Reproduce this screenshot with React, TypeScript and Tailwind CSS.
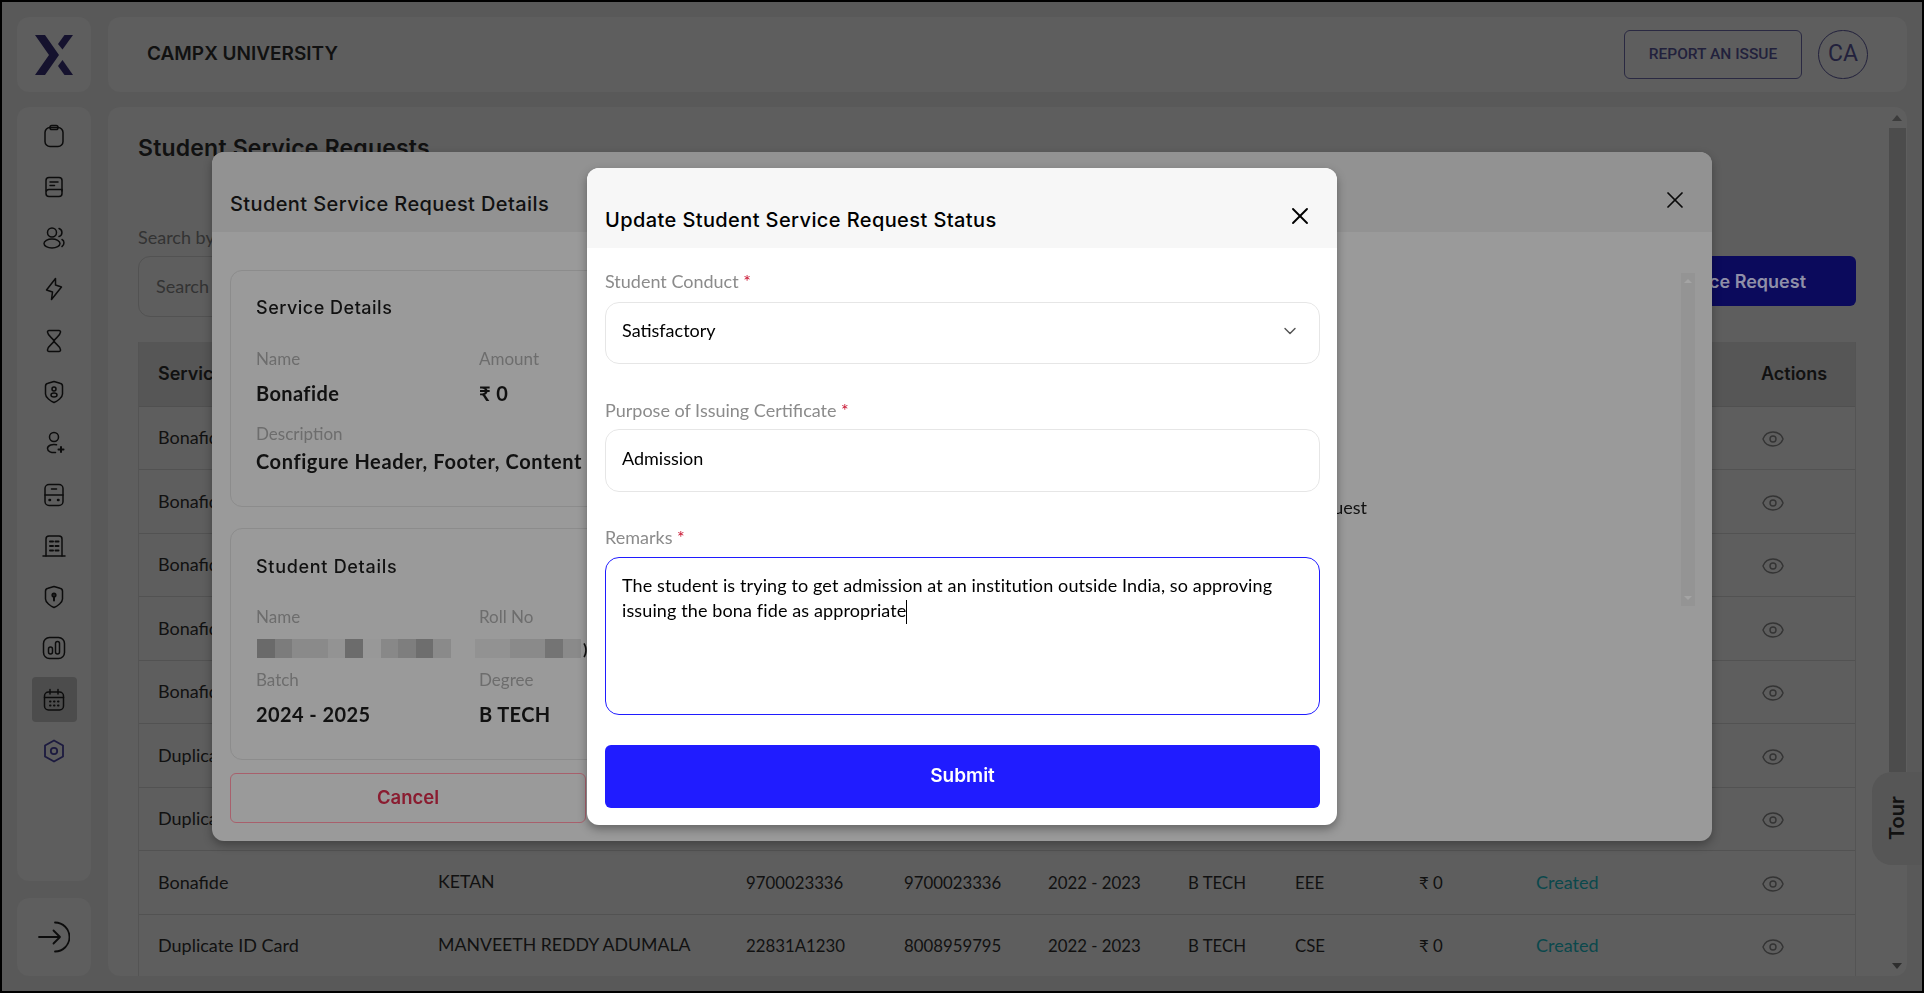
import { ChevronDown, Eye, X } from "lucide-react";
import type { ReactNode } from "react";

const heading = "font-['Inter',sans-serif]";
const cols = "grid grid-cols-[280px_308px_158px_144px_140px_107px_124px_117px_225px_114px]";

const rows = [
  { service: "Bonafide" },
  { service: "Bonafide" },
  { service: "Bonafide" },
  { service: "Bonafide" },
  { service: "Bonafide" },
  { service: "Duplicate ID Card" },
  { service: "Duplicate ID Card" },
  { service: "Bonafide", name: "KETAN", roll: "9700023336", phone: "9700023336", batch: "2022 - 2023", degree: "B TECH", branch: "EEE", amount: "₹ 0", status: "Created" },
  { service: "Duplicate ID Card", name: "MANVEETH REDDY ADUMALA", roll: "22831A1230", phone: "8008959795", batch: "2022 - 2023", degree: "B TECH", branch: "CSE", amount: "₹ 0", status: "Created" },
];

const nameBlocks = [
  "w-[18px] bg-[#6a6a6a]", "w-[17px] bg-[#7c7c7c]", "w-[36px] bg-[#8a8a8a]", "w-[17px] bg-[#939393]", "w-[18px] bg-[#6c6c6c]",
  "w-[18px] bg-[#989898]", "w-[17px] bg-[#888888]", "w-[18px] bg-[#7e7e7e]", "w-[17px] bg-[#6e6e6e]", "w-[18px] bg-[#8a8a8a]",
];
const rollBlocks = ["w-[35px] bg-[#929292]", "w-[35px] bg-[#8a8a8a]", "w-[18px] bg-[#747474]", "w-[18px] bg-[#8a8a8a]"];

function Ico({ children, className = "text-[#0c0c0c]" }: { children: ReactNode; className?: string }) {
  return (
    <svg width="24" height="24" viewBox="0 0 24 24" fill="none" stroke="currentColor" strokeWidth="1.5" strokeLinecap="round" strokeLinejoin="round" className={className}>
      {children}
    </svg>
  );
}

const navIcons = [
  <Ico key="clip"><rect x="3" y="3.5" width="18" height="19" rx="5" /><rect x="8" y="1.5" width="8" height="4" rx="1.8" /></Ico>,
  <Ico key="book"><path d="M4 16V5.5A3 3 0 0 1 7 2.5h10a3 3 0 0 1 3 3V16" /><path d="M4 17a3 3 0 0 1 3-2.5h13V18.5a3 3 0 0 1-3 3H7a3 3 0 0 1-3-3Z" /><path d="M8 7h8M8 10.5h4.5" /></Ico>,
  <Ico key="users"><circle cx="10" cy="6.5" r="4.5" /><ellipse cx="10" cy="17.5" rx="8" ry="4.5" /><path d="M17 2.5a4.2 4.2 0 0 1 0 8" /><path d="M20 13.5c2.6 1.2 2.6 5.4 0 7" /></Ico>,
  <Ico key="bolt"><path d="M13.5 1.500 4.500 13l6 2L9.500 22.500 19.500 10l-6-2Z" /></Ico>,
  <Ico key="glass"><path d="M7 1.500h10a1.500 1.500 0 0 1 1.500 1.700C18 7.500 13 9 12 12c-1-3-6-4.500-6.500-8.800A1.500 1.500 0 0 1 7 1.500Z" /><path d="M7 22.500h10a1.500 1.500 0 0 0 1.500-1.700C18 16.500 13 15 12 12c-1 3-6 4.500-6.500 8.800A1.500 1.500 0 0 0 7 22.500Z" /></Ico>,
  <Ico key="shield"><path d="M12 1.500 18 3.200a3 3 0 0 1 2.500 3V14c0 3.500-5 7-8.500 8.500C8.500 21 3.500 17.500 3.500 14V6.200a3 3 0 0 1 2.500-3Z" /><circle cx="12" cy="9" r="2" /><ellipse cx="12" cy="15" rx="3" ry="2" /></Ico>,
  <Ico key="userplus"><circle cx="12" cy="6" r="4.500" /><path d="M14.500 13.800C11 12.800 5.500 14 5.500 17.500c0 3 4 4.500 8 4" /><path d="M16.500 18.500h5M19 16v5" strokeWidth="2" /></Ico>,
  <Ico key="bus"><rect x="3" y="1.500" width="18" height="21" rx="4" /><path d="M3 12h18M9.500 6h5" /><path d="M7.500 17h.5M16 17h.5" strokeWidth="2.500" /></Ico>,
  <Ico key="building"><path d="M4 22V5a3 3 0 0 1 3-3h10a3 3 0 0 1 3 3v17" /><path d="M1 22h22" /><path d="M8 7.500h3M13.500 7.500h3M8 12h3M13.500 12h3M8 16.500h3M13.500 16.500h3" strokeWidth="2" /></Ico>,
  <Ico key="lock"><path d="M12 1.500 18 3.200a3 3 0 0 1 2.500 3V14c0 3.500-5 7-8.500 8.500C8.500 21 3.500 17.500 3.500 14V6.200a3 3 0 0 1 2.500-3Z" /><circle cx="12" cy="10" r="1.600" strokeWidth="2" /><path d="M12 12v3.500" strokeWidth="2" /></Ico>,
  <Ico key="chart"><rect x="1.500" y="1.500" width="21" height="21" rx="6" /><rect x="6.500" y="11" width="4" height="7" rx="2" /><rect x="13.500" y="5.500" width="4" height="12.500" rx="2" /></Ico>,
  <Ico key="cal"><rect x="2.500" y="4" width="19" height="18" rx="4" /><path d="M2.500 9.500h19M8 1.500V6M16 1.500V6" /><path d="M8 13.500h.5M12 13.500h.5M16 13.500h.5M8 17.500h.5M12 17.500h.5M16 17.500h.5" strokeWidth="2" /></Ico>,
  <Ico key="hex" className="text-[#1c1a3f]"><path d="M12 1.500 21 6.500v11l-9 5-9-5v-11Z" strokeWidth="1.800" /><circle cx="12" cy="12" r="3.200" strokeWidth="1.800" /></Ico>,
];

function Field({ label, children }: { label: string; children: ReactNode }) {
  return (
    <div>
      <div className="h-6 text-[18px] leading-6 text-[#8b8b8b]">
        {label} <span className="text-[#c8102e]">*</span>
      </div>
      {children}
    </div>
  );
}

function Info({ label, value }: { label: string; value: string }) {
  return (
    <div>
      <div className="h-6 text-[17px] leading-6 text-[#6d6d6d]">{label}</div>
      <div className="mt-2 h-7 text-[20px] font-bold leading-7 tracking-[0.4px] text-[#111]">{value}</div>
    </div>
  );
}

export default function App() {
  return (
    <div className="relative h-screen w-full overflow-hidden border-2 border-black bg-[#595959] font-['Lato',sans-serif] text-[#111]">
      <div className="grid h-full grid-cols-[74px_1fr] grid-rows-[75px_1fr] gap-x-[17px] gap-y-[15px] p-[15px]">
        {/* logo */}
        <div className="flex items-center justify-center rounded-xl bg-[#5e5e5e]">
          <svg width="38" height="40" viewBox="0 0 38 40" fill="#15122e">
            <path d="M0 0h10l14 20-14 20H0l14-20Z" />
            <path d="M23 9 29.500 0H38L27.500 14.500Z" />
            <path d="M23 31l4.500-6L38 40h-8.500Z" />
          </svg>
        </div>

        {/* top bar */}
        <header className="flex items-center justify-between rounded-xl bg-[#5e5e5e] pl-[39px] pr-[39px]">
          <div className={`${heading} text-[19px] font-semibold text-[#111]`}>CAMPX UNIVERSITY</div>
          <div className="flex items-center gap-[16px]">
            <div className="flex h-[49px] w-[178px] items-center justify-center rounded-md border border-[#2a2942] font-['Roboto',sans-serif] text-[15.500px] font-medium text-[#22213c]">
              REPORT AN ISSUE
            </div>
            <div className="flex h-[49px] w-[50px] items-center justify-center rounded-full border border-[#22213c] font-['Roboto',sans-serif] text-[23px] text-[#22213c]">
              CA
            </div>
          </div>
        </header>

        {/* side nav */}
        <aside className="flex min-h-0 flex-col gap-[17px]">
          <nav className="flex flex-1 flex-col items-center gap-[6.300px] rounded-xl bg-[#5e5e5e] pt-[6px]">
            {navIcons.map((icon, i) => (
              <div key={i} className={`flex h-[45px] w-[45px] items-center justify-center rounded ${i === 11 ? "bg-[#4c4c4c]" : ""}`}>
                {icon}
              </div>
            ))}
          </nav>
          <div className="flex h-[78px] items-center justify-center rounded-xl bg-[#5e5e5e]">
            <svg width="32" height="32" viewBox="0 0 32 32" fill="none" stroke="#0c0c0c" strokeWidth="1.800" strokeLinecap="round" strokeLinejoin="round">
              <path d="M17 1.500a14.500 14.500 0 0 1 0 29" />
              <path d="M1 16h21M15.500 9.500 22 16l-6.500 6.500" />
            </svg>
          </div>
        </aside>

        {/* page */}
        <main className="flex min-h-0 overflow-hidden rounded-xl bg-[#5e5e5e]">
          <div className="flex min-w-0 flex-1 flex-col pl-[30px] pr-[31px] pt-[27px]">
            <h1 className={`${heading} h-7 text-[23px] font-semibold leading-7 tracking-[0.2px] text-[#111]`}>Student Service Requests</h1>
            <div className="mt-[63px] h-6 text-[18px] leading-6 text-[#333]">Search by</div>
            <div className="mt-[7px] flex h-[61px] items-start justify-between">
              <div className="flex h-[61px] w-[400px] items-center rounded-xl border border-[#525252] pl-[17px] text-[18px] text-[#333]">Search</div>
              <div className={`${heading} flex h-[50px] w-[300px] items-center justify-end rounded-md bg-[#0b0a5c] pr-[50px] text-[18px] font-semibold text-[#8f8fa8]`}>New Service Request</div>
            </div>
            <div className="mt-[25px] border-x border-[#545454]">
              <div className={`${cols} ${heading} h-[64.500px] items-center border-b border-[#505050] bg-[#565656] text-[18px] font-semibold text-[#111]`}>
                {["Service Name", "Student Name", "Roll No", "Mobile", "Batch", "Degree", "Branch", "Amount", "Status", "Actions"].map((h) => (
                  <div key={h} className="pl-[19px]">{h}</div>
                ))}
              </div>
              {rows.map((r, i) => (
                <div key={i} className={`${cols} h-[63.500px] items-center border-b border-[#525252] text-[16.800px] text-[#111]`}>
                  <div className="pl-[19px] text-[18px]">{r.service}</div>
                  <div className="pl-[19px] text-[17.700px]">{r.name}</div>
                  <div className="pl-[19px]">{r.roll}</div>
                  <div className="pl-[19px]">{r.phone}</div>
                  <div className="pl-[19px]">{r.batch}</div>
                  <div className="pl-[19px]">{r.degree}</div>
                  <div className="pl-[19px]">{r.branch}</div>
                  <div className="pl-[19px]">{r.amount}</div>
                  <div className="pl-[19px] text-[18px] text-[#0a484c]">{r.status}</div>
                  <div className="pl-[19px]"><Eye size={24} strokeWidth={1.4} className="mt-[3px] text-[#343434]" /></div>
                </div>
              ))}
            </div>
          </div>
          {/* page scrollbar */}
          <div className="flex w-[20px] shrink-0 flex-col items-center">
            <div className="flex h-[21px] items-center"><div className="h-0 w-0 border-x-[5px] border-b-[6px] border-x-transparent border-b-[#3c3c3c]" /></div>
            <div className="h-[644px] w-[17px] bg-[#4c4c4c]" />
            <div className="flex flex-1 items-end pb-[7px]"><div className="h-0 w-0 border-x-[5px] border-t-[6px] border-x-transparent border-t-[#2e2e2e]" /></div>
          </div>
        </main>
      </div>

      {/* tour tab */}
      <div className="absolute bottom-[126px] right-0 flex h-[93px] w-[50px] items-center justify-center rounded-l-[20px] bg-[#565656]">
        <span className={`${heading} rotate-180 text-[20px] font-semibold leading-none text-[#111] [writing-mode:vertical-rl]`}>Tour</span>
      </div>

      {/* details dialog */}
      <div className="fixed inset-0 flex items-center justify-center">
        <div className="flex h-[689px] w-[1500px] flex-col overflow-hidden rounded-xl bg-[#9a9a9a] shadow-[0_4px_10px_rgba(0,0,0,0.3)]">
          <div className="flex h-[80px] shrink-0 items-center justify-between bg-[#929292] pl-[18px] pr-[23px] pt-[24px]">
            <div className={`${heading} text-[20px] font-medium tracking-[0.4px] text-[#111]`}>Student Service Request Details</div>
            <X size={28} strokeWidth={1.5} className="mb-[8px] text-[#0a0a0a]" />
          </div>
          <div className="flex min-h-0 flex-1">
            <div className="w-[1070px] shrink-0 pl-[18px] pt-[38px]">
              <div className="h-[237px] rounded-xl border border-[#8c8c8c] pl-[25px] pt-[23px]">
                <div className={`${heading} h-7 text-[18px] font-medium leading-7 tracking-[0.5px]`}>Service Details</div>
                <div className="mt-[25px] grid grid-cols-[223px_1fr]">
                  <Info label="Name" value="Bonafide" />
                  <Info label="Amount" value="₹ 0" />
                </div>
                <div className="mt-[15px] h-6 text-[17px] leading-6 text-[#6d6d6d]">Description</div>
                <div className="mt-px h-7 text-[20px] font-bold leading-7 tracking-[0.6px] text-[#111]">Configure Header, Footer, Content</div>
              </div>
              <div className="mt-[21px] h-[232px] rounded-xl border border-[#8c8c8c] pl-[25px] pt-[24px]">
                <div className={`${heading} h-7 text-[18px] font-medium leading-7 tracking-[0.7px]`}>Student Details</div>
                <div className="mt-[24px] grid grid-cols-[223px_1fr]">
                  <div>
                    <div className="h-6 text-[17px] leading-6 text-[#6d6d6d]">Name</div>
                    <div className="ml-px mt-[10px] flex h-[19px]">
                      {nameBlocks.map((b, i) => <div key={i} className={b} />)}
                    </div>
                  </div>
                  <div>
                    <div className="h-6 text-[17px] leading-6 text-[#6d6d6d]">Roll No</div>
                    <div className="ml-[-4px] mt-[10px] flex h-[19px] items-center">
                      {rollBlocks.map((b, i) => <div key={i} className={`h-[19px] ${b}`} />)}
                      <span className="ml-[2px] text-[16px] font-bold">)</span>
                    </div>
                  </div>
                </div>
                <div className="mt-[10px] grid grid-cols-[223px_1fr]">
                  <Info label="Batch" value="2024 - 2025" />
                  <Info label="Degree" value="B TECH" />
                </div>
              </div>
              <div className={`${heading} mt-[13px] flex h-[50px] w-[356px] items-center justify-center rounded-md border border-[#a8606c] text-[18.500px] font-semibold text-[#8a1c30]`}>Cancel</div>
            </div>
            <div className="flex flex-1 justify-between pr-[17px]">
              <div className="pl-[21px] pt-[263px] text-[18px] leading-6 text-[#111]">Request</div>
              <div className="mt-[41px] flex h-[333px] w-[14px] flex-col items-center justify-between bg-[#949494] py-[6px]">
                <div className="h-0 w-0 border-x-[4px] border-b-[4px] border-x-transparent border-b-[#a4a4a4]" />
                <div className="h-0 w-0 border-x-[4px] border-t-[4px] border-x-transparent border-t-[#a4a4a4]" />
              </div>
            </div>
          </div>
        </div>
      </div>

      {/* status dialog */}
      <div className="fixed inset-0 flex items-center justify-center">
        <div className="w-[750px] overflow-hidden rounded-xl bg-white shadow-[0_4px_10px_rgba(0,0,0,0.35)]">
          <div className="flex h-[80px] items-center justify-between bg-[#f7f7f7] pl-[18px] pr-[23px] pt-[24px]">
            <div className={`${heading} text-[20px] font-medium tracking-[0.4px] text-black`}>Update Student Service Request Status</div>
            <X size={28} strokeWidth={1.6} className="mb-[8px] text-black" />
          </div>
          <div className="pb-[17px] pl-[18px] pr-[17px] pt-[21px] text-black">
            <Field label="Student Conduct">
              <div className="mt-[9px] flex h-[62px] items-center justify-between rounded-[14px] border border-[#e6e6e6] pb-[5px] pl-[16px] pr-[19px] text-[18px]">
                Satisfactory
                <ChevronDown size={20} strokeWidth={1.7} className="text-[#555]" />
              </div>
            </Field>
            <div className="mt-[34px]">
              <Field label="Purpose of Issuing Certificate">
                <div className="mt-[7px] flex h-[63px] items-center rounded-[14px] border border-[#e6e6e6] pb-[5px] pl-[16px] text-[18px]">Admission</div>
              </Field>
            </div>
            <div className="mt-[33px]">
              <Field label="Remarks">
                <div className="mt-2 h-[158px] rounded-[14px] border border-[#201cff] pl-[16px] pt-[15px] text-[18px] leading-[25px] tracking-[0.12px]">
                  The student is trying to get admission at an institution outside India, so approving
                  <br />
                  issuing the bona fide as appropriate<span className="inline-block h-[24px] w-px bg-black align-middle" />
                </div>
              </Field>
            </div>
            <div className={`${heading} mt-[30px] flex h-[63px] items-center justify-center rounded-md bg-[#201cff] text-[19px] font-semibold text-white`}>Submit</div>
          </div>
        </div>
      </div>
    </div>
  );
}
